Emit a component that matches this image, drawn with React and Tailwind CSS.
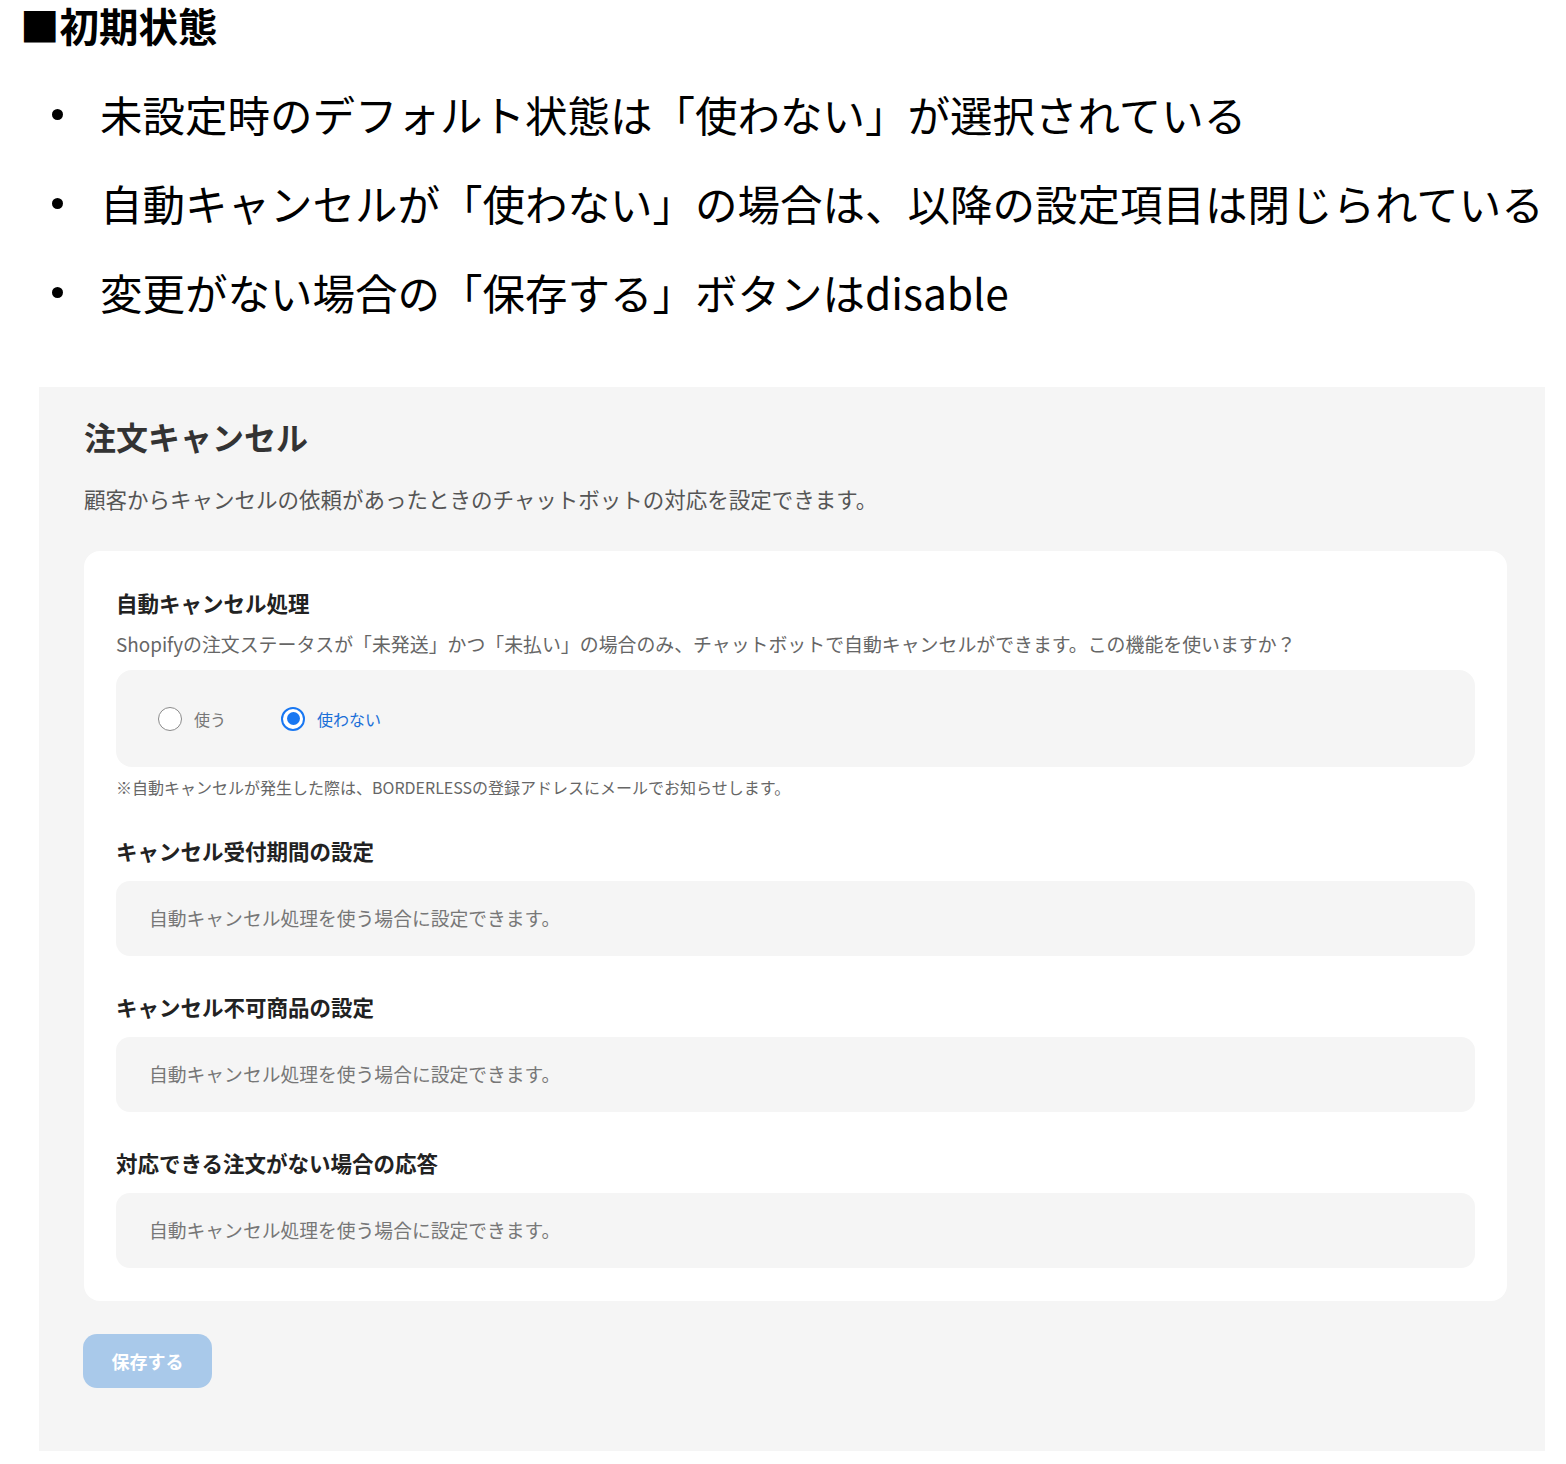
import React from "react";

const font = "font-['Noto_Sans_CJK_JP','Noto_Sans',sans-serif]";

const bullets = [
  "未設定時のデフォルト状態は「使わない」が選択されている",
  "自動キャンセルが「使わない」の場合は、以降の設定項目は閉じられている",
  "変更がない場合の「保存する」ボタンはdisable",
];

const sections = [
  "キャンセル受付期間の設定",
  "キャンセル不可商品の設定",
  "対応できる注文がない場合の応答",
];

const Radio = ({ checked, label }) => (
  <label className="flex items-center gap-3">
    {checked ? (
      <span className="flex h-6 w-6 items-center justify-center rounded-full border-2 border-[#1877f2] bg-white">
        <span className="h-[13px] w-[13px] rounded-full bg-[#1877f2]" />
      </span>
    ) : (
      <span className="h-6 w-6 rounded-full border-[1.5px] border-[#8a8a8a] bg-white" />
    )}
    <span className={`text-[16px] ${checked ? "text-[#1a6fd8]" : "text-[#777]"}`}>{label}</span>
  </label>
);

const DisabledBox = () => (
  <div className="mt-[15px] flex h-[75px] items-center rounded-[14px] bg-[#f5f5f5] pl-[33px] text-[18.8px] text-[#777]">
    自動キャンセル処理を使う場合に設定できます。
  </div>
);

export default function App() {
  return (
    <div className={`${font} min-h-[1464px] bg-white pb-[12px] text-black`}>
      <h1 className="pl-[20px] text-[39.5px] font-bold leading-[50px]">■初期状態</h1>

      <ul className="mt-[20px]">
        {bullets.map((b, i) => (
          <li key={i} className="flex h-[89px] items-center">
            <span className="ml-[52px] h-[11px] w-[11px] shrink-0 rounded-full bg-black" />
            <span className="ml-[37px] whitespace-nowrap text-[42.5px] leading-none">{b}</span>
          </li>
        ))}
      </ul>

      <div className="ml-[39px] mt-[50px] h-[1064px] w-[1506px] bg-[#f5f5f5] pl-[45px] pt-[29px]">
        <h2 className="text-[32px] font-bold leading-[40px] text-[#333]">注文キャンセル</h2>
        <p className="mt-[28px] text-[21.5px] leading-[30px] text-[#555]">
          顧客からキャンセルの依頼があったときのチャットボットの対応を設定できます。
        </p>

        <div className="mt-[37px] w-[1423px] rounded-[16px] bg-white px-[32px] pb-[33px] pt-[37px]">
          <h3 className="text-[21.5px] font-bold leading-[30px] text-[#222]">自動キャンセル処理</h3>
          <p className="mt-[12px] whitespace-nowrap text-[18.9px] leading-[28px] text-[#666]">
            Shopifyの注文ステータスが「未発送」かつ「未払い」の場合のみ、チャットボットで自動キャンセルができます。この機能を使いますか？
          </p>
          <div className="mt-[12px] flex h-[97px] items-center gap-[55px] rounded-[16px] bg-[#f5f5f5] pl-[42px]">
            <Radio label="使う" />
            <Radio checked label="使わない" />
          </div>
          <p className="mt-[9px] text-[16px] leading-[22px] text-[#666]">
            ※自動キャンセルが発生した際は、BORDERLESSの登録アドレスにメールでお知らせします。
          </p>

          {sections.map((s, i) => (
            <div key={s} className={i === 0 ? "mt-[38px]" : "mt-[36px]"}>
              <h3 className="text-[21.5px] font-bold leading-[30px] text-[#222]">{s}</h3>
              <DisabledBox />
            </div>
          ))}
        </div>

        <button
          disabled
          className="-ml-px mt-[33px] h-[54px] w-[129px] rounded-[14px] bg-[#a9c9ea] text-[18px] font-bold text-white"
        >
          保存する
        </button>
      </div>
    </div>
  );
}
